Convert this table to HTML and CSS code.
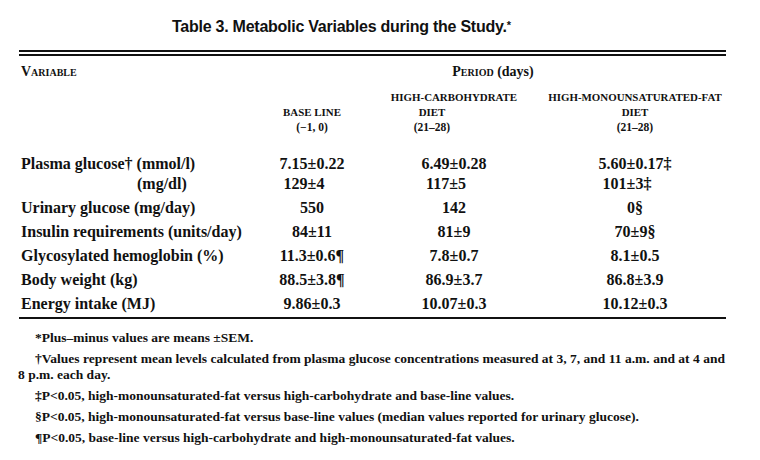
FILE: index.html
```html
<!DOCTYPE html>
<html>
<head>
<meta charset="utf-8">
<link rel="stylesheet" href="styles.css">
</head>
<body>
<div class="page">
  <h1 class="title">Table 3. Metabolic Variables during the Study.<span class="star">*</span></h1>
  <div class="double-rule"></div>
  <table class="data">
    <colgroup>
      <col class="c-label">
      <col class="c-base">
      <col class="c-carb">
      <col class="c-fat">
    </colgroup>
    <thead>
      <tr class="head-top">
        <th class="var">Variable</th>
        <th class="period" colspan="3">Period <span class="days">(days)</span></th>
      </tr>
      <tr class="head-cols">
        <th></th>
        <th class="sc"><span class="line">base line</span><span class="range">(−1, 0)</span></th>
        <th class="sc"><span class="line">high-carbohydrate</span><span class="line lean">diet</span><span class="range lean">(21–28)</span></th>
        <th class="sc fat"><span class="line">high-monounsaturated-fat</span><span class="line">diet</span><span class="range">(21–28)</span></th>
      </tr>
    </thead>
    <tbody>
      <tr class="pair-top">
        <td class="label">Plasma glucose† (mmol/l)</td>
        <td>7.15±0.22</td>
        <td>6.49±0.28</td>
        <td class="fat">5.60±0.17‡</td>
      </tr>
      <tr class="pair-bottom">
        <td class="label sub">(mg/dl)</td>
        <td class="shift">129±4</td>
        <td class="shift">117±5</td>
        <td class="fat shift">101±3‡</td>
      </tr>
      <tr>
        <td class="label">Urinary glucose (mg/day)</td>
        <td>550</td>
        <td>142</td>
        <td class="fat">0§</td>
      </tr>
      <tr>
        <td class="label">Insulin requirements (units/day)</td>
        <td>84±11</td>
        <td>81±9</td>
        <td class="fat">70±9§</td>
      </tr>
      <tr>
        <td class="label">Glycosylated hemoglobin (%)</td>
        <td>11.3±0.6¶</td>
        <td>7.8±0.7</td>
        <td class="fat">8.1±0.5</td>
      </tr>
      <tr>
        <td class="label">Body weight (kg)</td>
        <td>88.5±3.8¶</td>
        <td>86.9±3.7</td>
        <td class="fat">86.8±3.9</td>
      </tr>
      <tr>
        <td class="label">Energy intake (MJ)</td>
        <td>9.86±0.3</td>
        <td>10.07±0.3</td>
        <td class="fat">10.12±0.3</td>
      </tr>
    </tbody>
  </table>
  <div class="notes">
    <p>*Plus–minus values are means ±SEM.</p>
    <p>†Values represent mean levels calculated from plasma glucose concentrations measured at 3, 7, and 11 a.m. and at 4 and 8 p.m. each day.</p>
    <p>‡P&lt;0.05, high-monounsaturated-fat versus high-carbohydrate and base-line values.</p>
    <p>§P&lt;0.05, high-monounsaturated-fat versus base-line values (median values reported for urinary glucose).</p>
    <p>¶P&lt;0.05, base-line versus high-carbohydrate and high-monounsaturated-fat values.</p>
  </div>
</div>
</body>
</html>
```

FILE: styles.css
```css
html, body {
  margin: 0;
  padding: 0;
  background: #ffffff;
}

.page {
  width: 760px;
  height: 460px;
  color: #111111;
  font-family: "Liberation Serif", "Times New Roman", serif;
  overflow: hidden;
}

.title {
  margin: 15px 0 0 0;
  padding-left: 172px;
  font-family: "Liberation Sans", Arial, sans-serif;
  font-weight: bold;
  font-size: 16px;
  letter-spacing: -0.25px;
  line-height: 20px;
  text-align: left;
}

.title .star {
  font-size: 11px;
  vertical-align: 3px;
}

.double-rule {
  margin: 13px 34px 0 19px;
  height: 2px;
  border-top: 2px solid #111;
  border-bottom: 2px solid #111;
}

.data {
  margin-left: 19px;
  width: 707px;
  border-collapse: collapse;
  table-layout: fixed;
  border-bottom: 2px solid #111;
}

.c-label { width: 231px; }
.c-base { width: 124px; }
.c-carb { width: 160px; }
.c-fat { width: 192px; }

.data th {
  font-weight: bold;
  padding: 0;
  text-align: center;
}

.head-top th {
  padding-top: 6px;
  height: 20px;
  line-height: 20px;
  vertical-align: middle;
}

.data th.var {
  text-align: left;
  padding-left: 2px;
  font-variant: small-caps;
  font-size: 14px;
}

.data th.period {
  font-variant: small-caps;
  font-size: 14px;
  padding-left: 10px;
}

.period .days {
  font-variant: normal;
  font-size: 14px;
}

.head-cols th {
  vertical-align: bottom;
  font-size: 10.9px;
  line-height: 15px;
  padding-top: 8px;
  padding-bottom: 17px;
}

.sc .line {
  text-transform: uppercase;
}

.line,
.range {
  display: block;
}

.range {
  font-size: 11.5px;
}

.lean {
  padding-right: 44px;
}

.data th.fat,
.data td.fat {
  padding-left: 10px;
}

.data td {
  font-size: 16px;
  font-weight: bold;
  line-height: 20px;
  padding: 2px 0;
  text-align: center;
  white-space: nowrap;
}

.data td.label {
  text-align: left;
  padding-left: 2px;
}

.data td.sub {
  padding-left: 118px;
}

.pair-top td {
  padding-bottom: 0;
}

.pair-bottom td {
  padding-top: 0;
}

.data td.shift {
  padding-right: 16px;
}

.data tbody tr:last-child td {
  padding-bottom: 3px;
}

.notes {
  margin: 11px 35px 0 18px;
  font-size: 13.5px;
  font-weight: bold;
  line-height: 16px;
  text-align: justify;
}

.notes p {
  margin: 0 0 5px 0;
  text-indent: 17px;
}
```
